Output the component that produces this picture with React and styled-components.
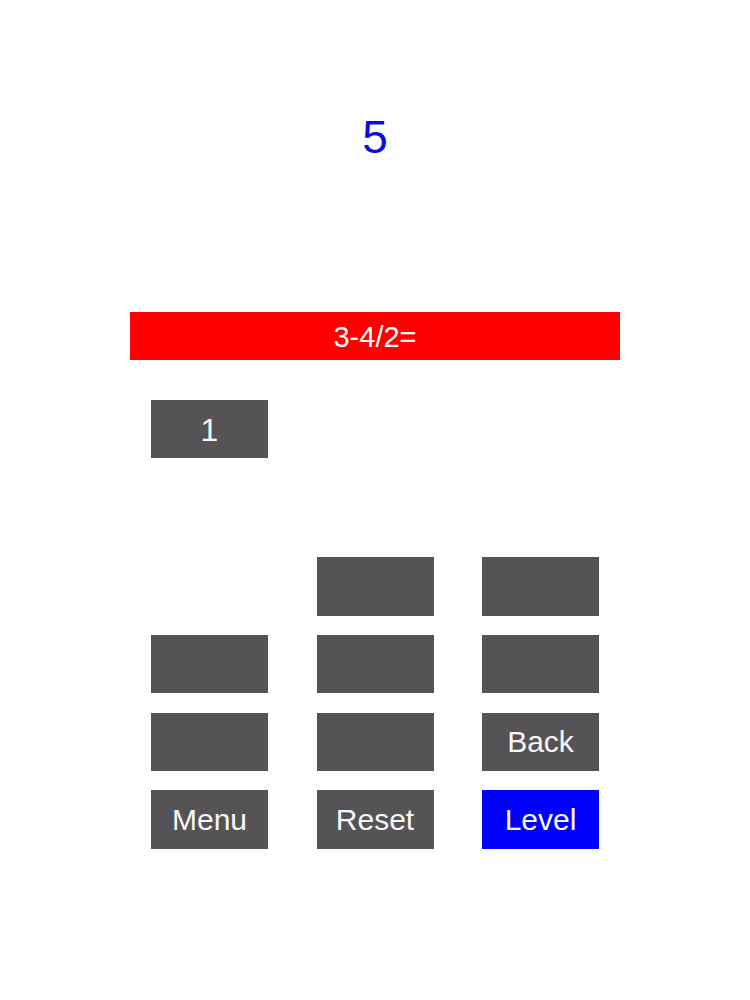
import React from "react";
import styled, { createGlobalStyle } from "styled-components";

const GlobalStyle = createGlobalStyle`
  html, body {
    margin: 0;
    padding: 0;
    background: #ffffff;
  }
  body {
    font-family: "Liberation Sans", Arial, Helvetica, sans-serif;
  }
`;

const Screen = styled.div`
  width: 750px;
  height: 1000px;
  display: flex;
  flex-direction: column;
  align-items: center;
  padding-top: 114px;
  box-sizing: border-box;
`;

const Score = styled.div`
  font-size: 46px;
  line-height: 46px;
  color: #0a0ae6;
  text-align: center;
`;

const Question = styled.div`
  margin-top: 152px;
  width: 490px;
  height: 48px;
  padding-top: 3px;
  box-sizing: border-box;
  background: #ff0000;
  color: #ffffff;
  font-size: 29px;
  display: flex;
  align-items: center;
  justify-content: center;
`;

const Board = styled.div`
  width: 448px;
  display: flex;
  flex-direction: column;
`;

const AnswerRow = styled.div`
  margin-top: 40px;
  display: flex;
`;

const Keypad = styled.div`
  margin-top: 99px;
  display: grid;
  grid-template-columns: repeat(3, 117px);
  grid-auto-rows: 58.3px;
  column-gap: 48.5px;
  row-gap: 19.4px;
`;

const Key = styled.button`
  width: 117px;
  height: 58.3px;
  margin: 0;
  padding: ${({ $big }) => ($big ? "3px 0 0" : "1px 0 0")};
  border: none;
  border-radius: 0;
  background: ${({ $accent }) => ($accent ? "#0000ff" : "#555356")};
  color: #f7f7f7;
  font-family: "Liberation Sans", Arial, Helvetica, sans-serif;
  font-size: ${({ $big }) => ($big ? "32px" : "30px")};
  display: flex;
  align-items: center;
  justify-content: center;
  visibility: ${({ $hidden }) => ($hidden ? "hidden" : "visible")};
`;

const keys = [
  { label: "", hidden: true },
  { label: "" },
  { label: "" },
  { label: "" },
  { label: "" },
  { label: "" },
  { label: "" },
  { label: "" },
  { label: "Back" },
  { label: "Menu" },
  { label: "Reset" },
  { label: "Level", accent: true },
];

export default function App() {
  return (
    <>
      <GlobalStyle />
      <Screen>
        <Score>5</Score>
        <Question>3-4/2=</Question>
        <Board>
          <AnswerRow>
            <Key $big>1</Key>
          </AnswerRow>
          <Keypad>
            {keys.map((k, i) => (
              <Key key={i} $hidden={k.hidden} $accent={k.accent}>
                {k.label}
              </Key>
            ))}
          </Keypad>
        </Board>
      </Screen>
    </>
  );
}
